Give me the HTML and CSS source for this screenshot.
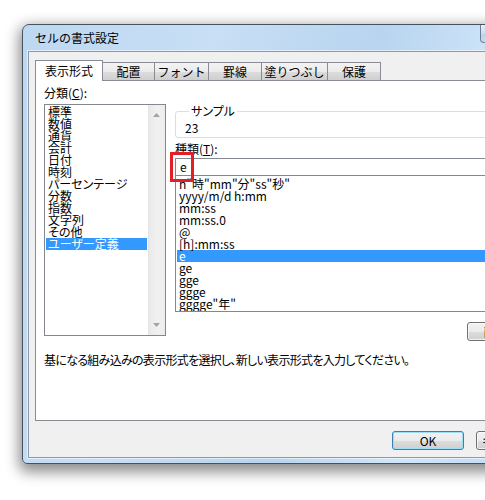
FILE: index.html
```html
<!DOCTYPE html>
<html lang="ja">
<head>
<meta charset="utf-8">
<title>セルの書式設定</title>
<link rel="stylesheet" href="styles.css">
</head>
<body>
<div class="window">
  <div class="titlebar">セルの書式設定</div>
  <div class="caption-btn"></div>
  <div class="client">
    <div class="tabctl">
      <div class="tabs">
        <div class="tab sel">表示形式</div>
        <div class="tab t-haichi">配置</div>
        <div class="tab t-font">フォント</div>
        <div class="tab t-keisen">罫線</div>
        <div class="tab t-nuri">塗りつぶし</div>
        <div class="tab t-hogo">保護</div>
      </div>
      <div class="panel">
        <div class="cols">
          <div class="leftcol">
            <div class="label">分類(<u>C</u>):</div>
            <div class="listbox cat">
              <ul class="items">
                <li>標準</li>
                <li>数値</li>
                <li>通貨</li>
                <li>会計</li>
                <li>日付</li>
                <li>時刻</li>
                <li>パーセンテージ</li>
                <li>分数</li>
                <li>指数</li>
                <li>文字列</li>
                <li>その他</li>
                <li class="hl">ユーザー定義</li>
              </ul>
              <div class="vscroll">
                <svg class="arrow" width="7" height="4" viewBox="0 0 7 4"><polygon points="0,4 3.5,0 7,4" fill="#a3a3a3"/></svg>
                <svg class="arrow" width="7" height="4" viewBox="0 0 7 4"><polygon points="0,0 7,0 3.5,4" fill="#a3a3a3"/></svg>
              </div>
            </div>
          </div>
          <div class="rightcol">
            <fieldset class="sample">
              <legend>サンプル</legend>
              <div class="sample-val">23</div>
            </fieldset>
            <div class="label type-label">種類(<u>T</u>):</div>
            <div class="type-input">
              <span>e</span>
              <div class="mark"></div>
            </div>
            <div class="listbox fmt">
              <ul class="items">
                <li>h"時"mm"分"ss"秒"</li>
                <li>yyyy/m/d h:mm</li>
                <li>mm:ss</li>
                <li>mm:ss.0</li>
                <li>@</li>
                <li>[h]:mm:ss</li>
                <li class="hl">e</li>
                <li>ge</li>
                <li>gge</li>
                <li>ggge</li>
                <li>gggge"年"</li>
              </ul>
            </div>
            <div class="btnrow">
              <button class="btn del">削除(<u>D</u>)</button>
            </div>
          </div>
        </div>
        <p class="desc">基になる組み込みの表示形式を選択し、新しい表示形式を入力してください。</p>
      </div>
    </div>
    <div class="footer">
      <button class="btn ok">OK</button>
      <button class="btn">キャンセル</button>
    </div>
  </div>
</div>
</body>
</html>
```

FILE: styles.css
```css
body {
  margin: 0;
  width: 485px;
  height: 500px;
  overflow: hidden;
  background: #ffffff;
  position: relative;
  font-family: "Noto Sans CJK JP", "Noto Sans", sans-serif;
  font-size: 12px;
  color: #000;
}

.window {
  position: absolute;
  left: 22px;
  top: 24px;
  width: 540px;
  height: 440px;
  box-sizing: border-box;
  border: 1px solid #46535f;
  border-radius: 7px 7px 5px 5px;
  background: linear-gradient(105deg, #bdd8f1 0%, #c8dff5 30%, #b8d4ef 55%, #d0e6fa 75%, #bcd7f1 100%);
  box-shadow: 0 5px 14px 3px rgba(0, 0, 0, 0.45);
  padding: 0 5px 5px 5px;
  display: flex;
  flex-direction: column;
}

.titlebar {
  height: 26px;
  line-height: 26px;
  padding-left: 7px;
  font-size: 12px;
  color: #000;
  flex: none;
}

.caption-btn {
  position: absolute;
  left: 457px;
  top: 0;
  width: 26px;
  height: 18px;
  box-sizing: border-box;
  border: 1px solid #6d7f95;
  border-top: none;
  border-radius: 0 0 0 4px;
  background: linear-gradient(#e6eff8, #cfdeee 50%, #bcd0e6 51%, #c9dcf0);
}

.client {
  flex: 1;
  box-sizing: border-box;
  border: 1px solid #8b99a8;
  box-shadow: 0 0 0 1px rgba(255, 255, 255, 0.55);
  background: #f0f0f0;
  padding: 8px 6px 0 6px;
  display: flex;
  flex-direction: column;
}

/* tabs */
.tabs {
  display: flex;
  align-items: flex-end;
  height: 21px;
}

.tab {
  box-sizing: border-box;
  height: 18px;
  margin-bottom: 1px;
  border: 1px solid #898c95;
  border-left: none;
  border-bottom: none;
  background: linear-gradient(#f3f3f3 0%, #ebebeb 50%, #dddddd 51%, #cfcfcf 100%);
  text-align: center;
  line-height: 17px;
  font-size: 12px;
}

.tab.sel {
  position: relative;
  z-index: 2;
  width: 68px;
  height: 21px;
  margin-bottom: 0;
  border-left: 1px solid #898c95;
  background: #ffffff;
  line-height: 20px;
}

.t-haichi { width: 52px; }
.t-font { width: 54px; }
.t-keisen { width: 53px; }
.t-nuri { width: 66px; }
.t-hogo { width: 53px; }

.panel {
  margin-top: -1px;
  height: 341px;
  box-sizing: border-box;
  border: 1px solid #898c95;
  background: #ffffff;
  padding: 5px 7px 0 8px;
}

.cols {
  display: flex;
  gap: 9px;
}

.label {
  line-height: 14px;
  height: 14px;
  font-feature-settings: "palt";
}

.leftcol {
  width: 122px;
  flex: none;
}

.listbox {
  box-sizing: border-box;
  border: 1px solid #828790;
  background: #ffffff;
  overflow: hidden;
}

.items {
  list-style: none;
  margin: 0;
  padding: 0;
  font-feature-settings: "palt";
}

.items li {
  height: 12px;
  line-height: 12px;
  padding-left: 2px;
  white-space: nowrap;
}

.items li.hl {
  background: #3399ff;
  color: #ffffff;
}

.listbox.cat {
  margin-top: 4px;
  height: 232px;
  display: flex;
}

.listbox.cat .items {
  flex: 1;
  padding: 1px;
}

.vscroll {
  width: 17px;
  flex: none;
  background: linear-gradient(to right, #e2e2e2 0, #ebebeb 2px, #f1f1f1 60%, #ececec 100%);
  display: flex;
  flex-direction: column;
  justify-content: space-between;
  align-items: center;
  padding: 8px 0 8px 0;
  box-sizing: border-box;
}

.arrow {
  display: block;
}

.rightcol {
  flex: 1;
  min-width: 0;
  display: flex;
  flex-direction: column;
}

.sample {
  margin: 18px 0 0 0;
  padding: 3px 9px 2px 9px;
  border: 1px solid #d5dfe5;
  border-radius: 3px;
  min-width: 0;
}

.sample legend {
  padding: 0 2px;
  margin-left: 4px;
  line-height: 14px;
  font-size: 12px;
  font-feature-settings: "palt";
}

.sample-val {
  line-height: 14px;
  height: 14px;
}

.type-label {
  margin-top: 4px;
}

.type-input {
  position: relative;
  margin-top: 2px;
  height: 18px;
  box-sizing: border-box;
  border: 1px solid #828790;
  background: #ffffff;
  padding-left: 4px;
  line-height: 16px;
}

.mark {
  position: absolute;
  left: -6px;
  top: -7px;
  width: 24px;
  height: 30px;
  box-sizing: border-box;
  border: 3px solid #e31e24;
}

.listbox.fmt {
  margin-top: -1px;
  height: 137px;
}

.listbox.fmt .items {
  padding: 2px 1px 0 1px;
}

.btnrow {
  display: flex;
  justify-content: flex-end;
  margin-top: 10px;
}

.btn {
  height: 19px;
  box-sizing: border-box;
  border: 1px solid #707070;
  border-radius: 3px;
  background: linear-gradient(#f2f2f2 0%, #ebebeb 50%, #dddddd 51%, #cfcfcf 100%);
  font-family: inherit;
  font-size: 12px;
  line-height: 17px;
  padding: 0;
  color: #000;
  box-shadow: inset 0 0 0 1px rgba(255, 255, 255, 0.7);
  width: 72px;
  white-space: nowrap;
  overflow: hidden;
}

.btn.del {
  width: 74px;
}

.btn.ok {
  border-color: #3c7fb1;
  box-shadow: inset 0 0 0 1px #9fdcf6;
}

.desc {
  margin: 12px 0 0 0;
  line-height: 14px;
  font-feature-settings: "palt";
  letter-spacing: -0.7px;
  white-space: nowrap;
}

.footer {
  display: flex;
  justify-content: flex-end;
  gap: 12px;
  margin-top: 10px;
  padding-right: 1px;
}
```
